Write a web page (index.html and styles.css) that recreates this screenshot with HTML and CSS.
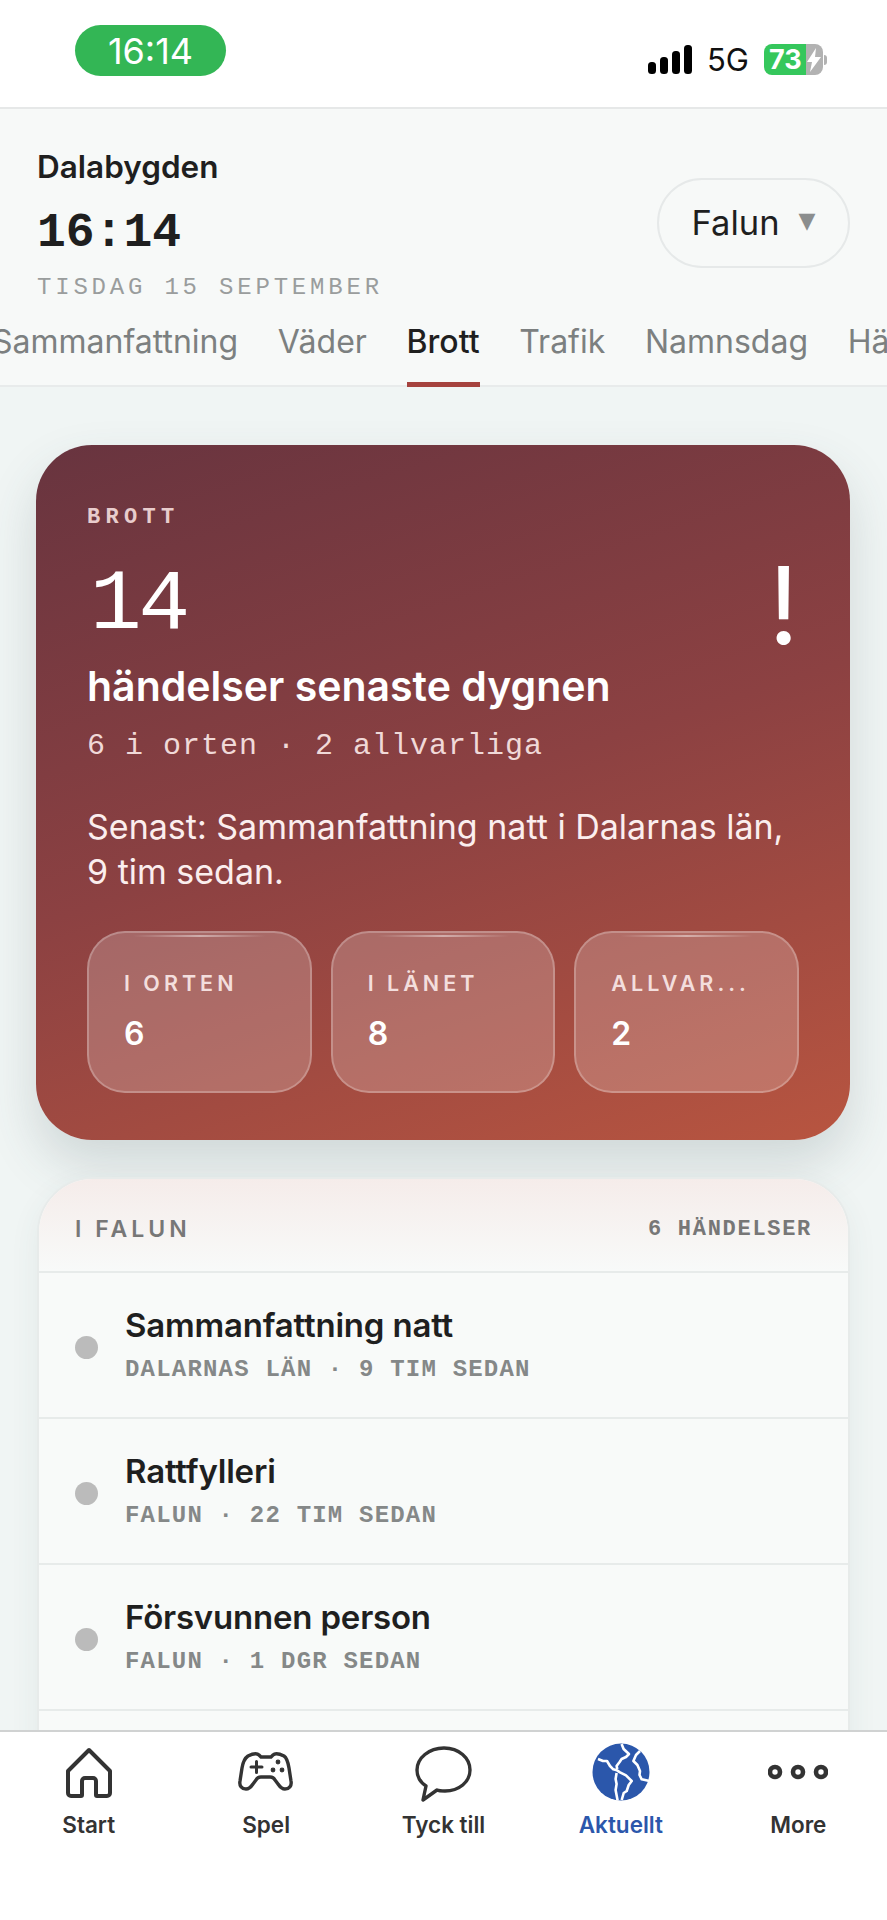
FILE: index.html
```html
<!DOCTYPE html>
<html lang="sv">
<head>
	<meta charset="UTF-8"/>
	<meta name="viewport" content="width=device-width,initial-scale=1.0"/>
	<title>Dalabygden - Aktuellt</title>
	<link rel="stylesheet" href="styles.css">
</head>
<body>

<div class="statusbar">
	<div class="clock-pill">16:14</div>
	<div class="status-right">
		<svg class="signal" width="45" height="29" viewBox="0 0 45 29">
			<rect x="0" y="17" width="8" height="12" rx="3.5"/>
			<rect x="12" y="12" width="8" height="17" rx="3.5"/>
			<rect x="24" y="6" width="8" height="23" rx="3.5"/>
			<rect x="36" y="0" width="8" height="29" rx="3.5"/>
		</svg>
		<span class="net">5G</span>
		<div class="battery">
			<div class="battery-fill">73</div>
			<div class="battery-rest">
				<svg width="16" height="24" viewBox="0 0 16 24"><path d="M10 0 1 14h5l-2 10 11-15H9z" fill="#fff"/></svg>
			</div>
			<div class="battery-nub"></div>
		</div>
	</div>
</div>

<header class="top">
	<div class="top-row">
		<div>
			<div class="brand">Dalabygden</div>
			<div class="time">16:14</div>
			<div class="date">TISDAG 15 SEPTEMBER</div>
		</div>
		<div class="place">Falun <span class="caret">▼</span></div>
	</div>
	<nav class="tabs">
		<span class="tab first">Sammanfattning</span>
		<span class="tab">Väder</span>
		<span class="tab active">Brott</span>
		<span class="tab">Trafik</span>
		<span class="tab">Namnsdag</span>
		<span class="tab">Hä</span>
	</nav>
</header>

<main>
	<section class="hero">
		<div class="hero-label">BROTT</div>
		<div class="hero-top">
			<div class="hero-num">14</div>
			<div class="hero-mark">!</div>
		</div>
		<div class="hero-title">händelser senaste dygnen</div>
		<div class="hero-sub">6 i orten · 2 allvarliga</div>
		<p class="hero-text">Senast: Sammanfattning natt i Dalarnas län, 9 tim sedan.</p>
		<div class="stats">
			<div class="stat"><div class="stat-label">I ORTEN</div><div class="stat-value">6</div></div>
			<div class="stat"><div class="stat-label">I LÄNET</div><div class="stat-value">8</div></div>
			<div class="stat"><div class="stat-label">ALLVAR...</div><div class="stat-value">2</div></div>
		</div>
	</section>

	<section class="list">
		<div class="list-head">
			<span class="list-title">I FALUN</span>
			<span class="list-count">6 HÄNDELSER</span>
		</div>
		<div class="row">
			<span class="dot"></span>
			<div><div class="row-title">Sammanfattning natt</div><div class="row-sub">DALARNAS LÄN · 9 TIM SEDAN</div></div>
		</div>
		<div class="row">
			<span class="dot"></span>
			<div><div class="row-title">Rattfylleri</div><div class="row-sub">FALUN · 22 TIM SEDAN</div></div>
		</div>
		<div class="row">
			<span class="dot"></span>
			<div><div class="row-title">Försvunnen person</div><div class="row-sub">FALUN · 1 DGR SEDAN</div></div>
		</div>
		<div class="row"></div>
	</section>
</main>

<footer class="tabbar">
	<div class="nav-item">
		<svg class="nav-icon" viewBox="0 0 60 60" fill="none" stroke="#333" stroke-width="4" stroke-linejoin="round">
			<path d="M30 8 9 29v22a3 3 0 0 0 3 3h10a1 1 0 0 0 1-1V39a3 3 0 0 1 3-3h8a3 3 0 0 1 3 3v14a1 1 0 0 0 1 1h10a3 3 0 0 0 3-3V29z"/>
		</svg>
		<span>Start</span>
	</div>
	<div class="nav-item">
		<svg class="nav-icon" viewBox="0 0 60 60" fill="none" stroke="#333" stroke-width="3.4" stroke-linecap="round" stroke-linejoin="round">
			<path d="M12 14c4-2 9-3 11-1l2 2h10l2-2c2-2 7-1 11 1 3 2 4 6 5 12l2 13c1 5-2 8-6 8-3 0-5-2-7-5l-3-4c-1-2-3-3-5-3H25c-2 0-4 1-5 3l-3 4c-2 3-4 5-7 5-4 0-7-3-6-8l2-13c1-6 3-10 6-12z"/>
			<path d="M15 25h11M20.500 19.500v11" stroke-width="3"/>
			<circle cx="42" cy="20" r="1.800" fill="#333" stroke-width="1.200"/>
			<circle cx="37" cy="28" r="1.800" fill="#333" stroke-width="1.200"/>
			<circle cx="46" cy="28" r="1.800" fill="#333" stroke-width="1.200"/>
		</svg>
		<span>Spel</span>
	</div>
	<div class="nav-item">
		<svg class="nav-icon" viewBox="0 0 60 60" fill="none" stroke="#333" stroke-width="3.4" stroke-linejoin="round">
			<path d="M31 6c15 0 26 10 26 22 0 12-11 21-25 21-3 0-6 0-8-1L10 58l3-14C7 40 4 35 4 28 4 16 16 6 31 6z"/>
		</svg>
		<span>Tyck till</span>
	</div>
	<div class="nav-item blue">
		<svg class="nav-icon" viewBox="0 0 60 60">
			<circle cx="30" cy="30" r="28.500" fill="#2b57ab"/>
			<g fill="none" stroke="#fff" stroke-width="2.600" stroke-linejoin="round">
				<path d="M7 17l5 2 4 0 3 5 3.300 3.300 3.700 1 3 2 6 3 5.700 5.700-3 4-2 6-3 2-2 7"/>
				<path d="M30.600 2l2 5 5.400 5-3 3-4.400 2-2 3-3 4 .7 3"/>
				<path d="M49 9l-4 4-2.600 6 4 4 2.600 6-.5 4 2.200 4.300 7.800 1.700"/>
				<path d="M25.600 31l-1 6 1 5-1 6 2 10.500"/>
			</g>
		</svg>
		<span>Aktuellt</span>
	</div>
	<div class="nav-item">
		<svg class="nav-icon more" viewBox="0 0 60 60" fill="none" stroke="#333" stroke-width="4.600">
			<circle cx="7" cy="30" r="5"/>
			<circle cx="30" cy="30" r="5"/>
			<circle cx="53" cy="30" r="5"/>
		</svg>
		<span>More</span>
	</div>
</footer>

</body>
</html>
```

FILE: styles.css
```css
* {box-sizing: border-box;}
html, body {
	margin: 0;
	height: 100%;
}
body {
	background: #f0f5f4;
	color: #1f1f1f;
	display: flex;
	flex-direction: column;
	font-family: "Inter", "Liberation Sans", sans-serif;
	height: 1920px;
	overflow: hidden;
}

/* phone status bar */
.statusbar {
	background: #fff;
	flex: none;
	height: 107px;
	display: flex;
	justify-content: space-between;
	padding: 25px 60px 0 75px;
}
.clock-pill {
	align-items: center;
	background: #33b655;
	border-radius: 26px;
	color: #fff;
	display: flex;
	font-size: 36px;
	height: 51px;
	justify-content: center;
	width: 151px;
}
.status-right {
	align-items: center;
	display: flex;
	height: 49px;
	margin-top: 10px;
}
.signal {fill: #000;}
.net {
	color: #111;
	font-size: 31px;
	margin-left: 14px;
	margin-right: 15px;
}
.battery {
	align-items: stretch;
	display: flex;
	height: 31px;
}
.battery-fill {
	background: #35c75c;
	border-radius: 8px 0 0 8px;
	color: #fff;
	font-size: 27px;
	font-weight: 700;
	line-height: 31px;
	padding-left: 5px;
	width: 42px;
}
.battery-rest {
	align-items: center;
	background: #b2b2b2;
	border-radius: 0 8px 8px 0;
	display: flex;
	width: 17px;
}
.battery-nub {
	align-self: center;
	background: #b2b2b2;
	border-radius: 0 3px 3px 0;
	height: 10px;
	margin-left: 1px;
	width: 3px;
}

/* header */
.top {
	background: #f7f9f8;
	border-top: 2px solid #e6e8e8;
	flex: none;
	height: 280px;
}
.top-row {
	display: flex;
	justify-content: space-between;
	padding: 40px 37px 0 37px;
}
.brand {
	font-size: 31.500px;
	font-weight: 600;
	line-height: 36px;
}
.time {
	font-family: "Liberation Mono", monospace;
	font-size: 48px;
	font-weight: 700;
	line-height: 56px;
	margin-top: 20px;
}
.date {
	color: #9a9d9d;
	font-family: "Liberation Mono", monospace;
	font-size: 24px;
	letter-spacing: 3.800px;
	line-height: 30px;
	margin-top: 12px;
	white-space: nowrap;
}
.place {
	align-items: center;
	border: 2px solid #e6e9e9;
	border-radius: 45px;
	display: flex;
	font-size: 34.500px;
	gap: 19px;
	height: 90px;
	justify-content: center;
	margin-top: 29px;
	padding-bottom: 2px;
	width: 193px;
}
.caret {
	color: #8b8e8e;
	font-family: "DejaVu Sans", sans-serif;
	font-size: 22px;
	margin-top: -4px;
}
.tabs {
	box-shadow: inset 0 -2px 0 #e8ebeb;
	display: flex;
	gap: 39.700px;
	height: 80px;
	margin-top: 4px;
	overflow: hidden;
}
.tab {
	color: #7c8080;
	flex: none;
	font-size: 32px;
	line-height: 70px;
	height: 80px;
	white-space: nowrap;
}
.tab.first {margin-left: -8px;}
.tab.active {
	border-bottom: 5px solid #a5423e;
	color: #1f1f1f;
	font-weight: 500;
}

/* content */
main {
	flex: 1;
	min-height: 0;
	overflow: hidden;
	padding: 58px 37px 0 36px;
}
.hero {
	background: linear-gradient(162deg, #68343f 0%, #8c4142 50%, #b85540 100%);
	border-radius: 56px;
	box-shadow: 0 24px 50px rgba(60, 85, 90, .18);
	color: #fff;
	height: 695px;
	padding: 60px 51px 0;
}
.hero-label {
	color: #e8cdcd;
	font-family: "Liberation Mono", monospace;
	font-size: 22px;
	font-weight: 700;
	letter-spacing: 5.300px;
	line-height: 26px;
}
.hero-top {
	align-items: flex-start;
	display: flex;
	justify-content: space-between;
	height: 96px;
	margin-top: 26px;
}
.hero-num {
	font-family: "Liberation Mono", monospace;
	font-size: 86px;
	letter-spacing: -3px;
	line-height: 96px;
	margin-left: 3px;
}
.hero-mark {
	font-family: "Inter", sans-serif;
	font-size: 107px;
	font-weight: 400;
	line-height: 96px;
}
.hero-title {
	font-size: 41px;
	font-weight: 600;
	line-height: 50px;
	margin-top: 8px;
}
.hero-sub {
	color: #f0d9d8;
	font-family: "Liberation Mono", monospace;
	font-size: 30px;
	letter-spacing: 1px;
	line-height: 36px;
	margin-top: 17px;
}
.hero-text {
	color: #fbeeee;
	font-size: 34px;
	line-height: 45px;
	margin: 40px 0 0;
}
.stats {
	display: grid;
	gap: 19px;
	grid-template-columns: repeat(3, 1fr);
	margin-top: 37px;
}
.stat {
	background: rgba(255, 255, 255, .2);
	border: 2px solid rgba(255, 255, 255, .24);
	border-radius: 38px;
	height: 162px;
	padding: 37px 35px 0;
	position: relative;
}
.stat::before {
	background: linear-gradient(90deg, transparent, rgba(255, 255, 255, .45), transparent);
	content: "";
	height: 2px;
	left: 20%;
	position: absolute;
	right: 20%;
	top: 2px;
}
.stat-label {
	color: #f3dedd;
	font-size: 21.500px;
	font-weight: 600;
	letter-spacing: 4px;
	line-height: 26px;
	overflow: hidden;
	white-space: nowrap;
}
.stat-value {
	font-size: 32px;
	font-weight: 600;
	line-height: 40px;
	margin-top: 18px;
}

.list {
	background: #f8faf9;
	border: 2px solid #e7ebea;
	border-radius: 56px 56px 0 0;
	box-shadow: 0 10px 30px rgba(60, 85, 90, .07);
	margin: 37px 0 0 1px;
}
.list-head {
	align-items: center;
	background: linear-gradient(180deg, #f5ecea 0%, #f8faf9 100%);
	border-bottom: 2px solid #e7ebea;
	border-radius: 54px 54px 0 0;
	display: flex;
	height: 94px;
	justify-content: space-between;
	padding: 8px 36px 0;
}
.list-title {
	color: #777;
	font-size: 23px;
	font-weight: 600;
	letter-spacing: 4px;
}
.list-count {
	color: #777;
	font-family: "Liberation Mono", monospace;
	font-size: 22px;
	font-weight: 700;
	letter-spacing: 1.700px;
}
.row {
	align-items: center;
	border-bottom: 2px solid #e7ebea;
	display: flex;
	gap: 27px;
	height: 146px;
	padding-left: 36px;
}
.dot {
	background: #bbb;
	border-radius: 50%;
	flex: none;
	height: 23px;
	margin-top: 4px;
	width: 23px;
}
.row-title {
	font-size: 33px;
	font-weight: 600;
	letter-spacing: -.2px;
	line-height: 40px;
}
.row-sub {
	color: #858888;
	font-family: "Liberation Mono", monospace;
	font-size: 24px;
	font-weight: 700;
	letter-spacing: 1.200px;
	line-height: 30px;
	margin-top: 10px;
}

/* bottom tabs */
.tabbar {
	background: #fff;
	border-top: 2px solid #d0d2d2;
	display: grid;
	flex: none;
	grid-template-columns: repeat(5, 1fr);
	height: 190px;
	padding-top: 10px;
}
.nav-item {
	align-items: center;
	color: #333;
	display: flex;
	flex-direction: column;
	font-size: 22.500px;
	font-weight: 600;
}
.nav-item.blue {color: #2b57ab;}
.nav-icon {
	display: block;
	height: 60px;
	margin-bottom: 9px;
	width: 60px;
}
```
